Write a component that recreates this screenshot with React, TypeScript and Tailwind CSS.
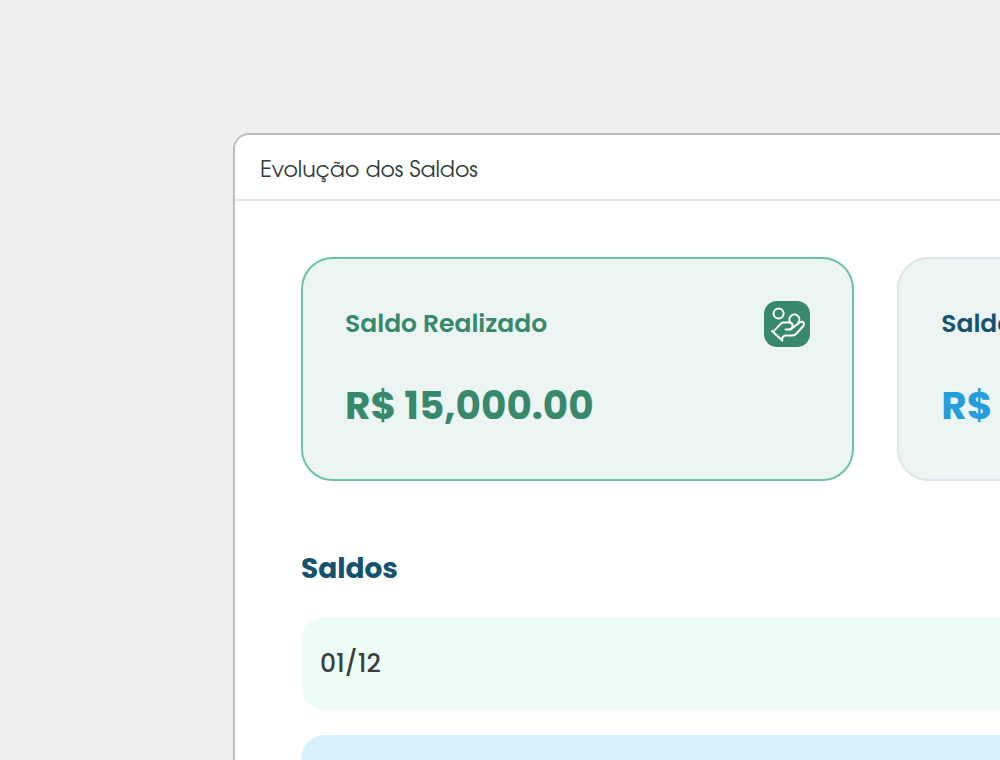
import clsx from "clsx";

const balances = [
  {
    id: "realizado",
    title: "Saldo Realizado",
    value: "R$ 15,000.00",
    card: "border-[#6bc3a3] bg-[#ecf5f4]",
    titleColor: "text-[#38896b]",
    valueColor: "text-[#38896b]",
    hasIcon: true,
  },
  {
    id: "saldo",
    title: "Saldo",
    value: "R$",
    card: "border-[#dbe7e6] bg-[#edf4f4]",
    titleColor: "text-[#14536f]",
    valueColor: "text-[#259fdc]",
    hasIcon: false,
  },
];

const rows = [
  { id: 1, date: "01/12", color: "bg-[#effdf8]" },
  { id: 2, date: "", color: "bg-[#d9f1fc]" },
];

// Hand holding coins
function HandCoinsIcon() {
  return (
    <svg
      viewBox="0 0 46 46"
      className="size-[46px] shrink-0"
      fill="none"
      stroke="#ffffff"
      strokeWidth="2"
      strokeLinecap="round"
      strokeLinejoin="round"
      aria-hidden="true"
    >
      <rect width="46" height="46" rx="13" fill="#38896b" stroke="none" />
      <circle cx="14.6" cy="12.4" r="5" />
      <path d="M27 22.2A5 5 0 1 1 34.4 21.4" />
      <path d="M8 30L18.4 39.6" />
      <path d="M10.2 29.6L17.2 22.4Q18.2 21.6 19.6 21.6H25.5Q28.6 21.8 28.6 24.6Q28.4 28.6 24.6 28.6H21.6" />
      <path d="M28.4 27L35.8 21.4Q38 20 39.6 21.5Q40.8 23.2 39.3 25L32.5 32.5Q30.8 34.4 28.2 34.5H21.4Q20.2 34.6 19.4 35.6L17.4 38.2" />
    </svg>
  );
}

export default function App() {
  return (
    <main className="h-screen overflow-hidden bg-[#efefef] pt-[133px] pl-[233px] font-['Poppins','Inter',sans-serif]">
      <section className="min-h-full rounded-tl-2xl border-t-2 border-l-2 border-[#b9bfbe] bg-white">
        {/* Header */}
        <header className="border-b-2 border-[#dfe9e7] px-[25px] pt-5 pb-3">
          <h1 className="font-['Century_Gothic','URW_Gothic','TeX_Gyre_Adventor','Questrial','Didact_Gothic','Lato',sans-serif] text-[22px] leading-8 text-[#2f3d39]">
            Evolução dos Saldos
          </h1>
        </header>

        <div className="pt-14 pl-[66px]">
          {/* Balance cards */}
          <div className="grid auto-cols-[calc(79%+1px)] grid-flow-col gap-[43px]">
            {balances.map((balance) => (
              <article
                key={balance.id}
                className={clsx("h-56 rounded-[32px] border-2 p-[42px]", balance.card)}
              >
                <div className="flex h-[46px] items-center justify-between">
                  <h2 className={clsx("text-[25px] leading-[34px] font-semibold", balance.titleColor)}>
                    {balance.title}
                  </h2>
                  {balance.hasIcon && <HandCoinsIcon />}
                </div>
                <p className={clsx("mt-[33px] text-[39px] leading-[52px] font-bold", balance.valueColor)}>
                  {balance.value}
                </p>
              </article>
            ))}
          </div>

          {/* Saldos list */}
          <h2 className="mt-[68px] text-[28px] leading-10 font-bold text-[#14536f]">Saldos</h2>
          <ul className="mt-7 flex flex-col gap-[25px]">
            {rows.map((row) => (
              <li
                key={row.id}
                className={clsx(
                  "flex h-[93px] items-center rounded-l-3xl pl-[19px] text-[25px] leading-[34px] font-medium text-[#3a3f3e]",
                  row.color
                )}
              >
                {row.date}
              </li>
            ))}
          </ul>
        </div>
      </section>
    </main>
  );
}
